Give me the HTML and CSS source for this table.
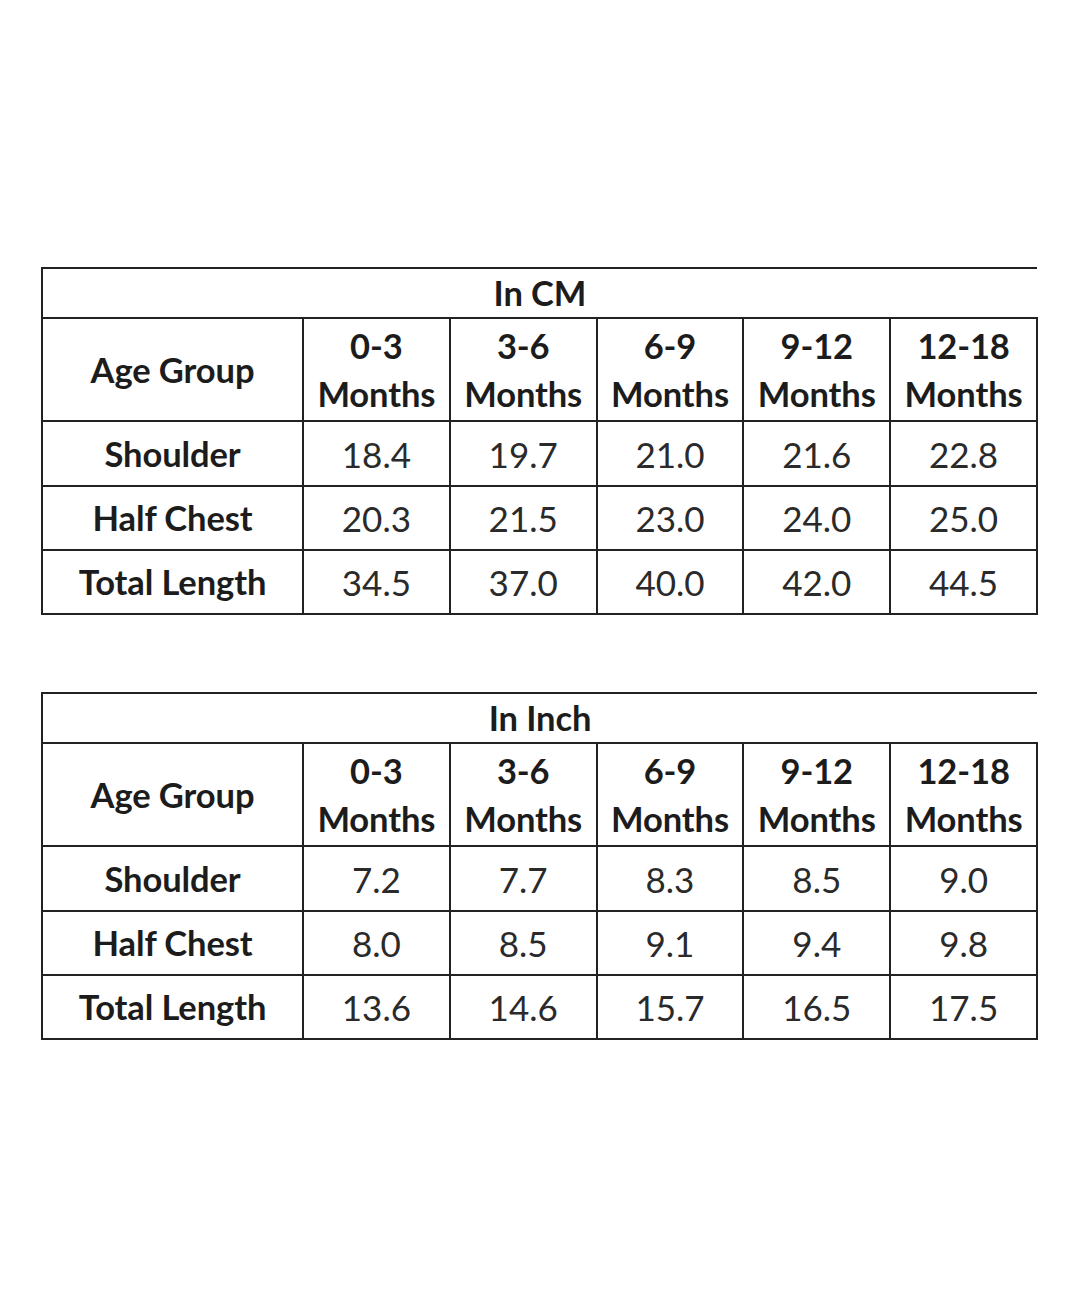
FILE: index.html
```html
<!DOCTYPE html>
<html>
<head>
<meta charset="utf-8">
<link rel="stylesheet" href="styles.css">
</head>
<body>
<div class="page">
  <table class="size">
    <colgroup><col class="c-first"><col class="c"><col class="c"><col class="c"><col class="c"><col class="c"></colgroup>
    <tr class="r-title"><th class="title" colspan="6">In CM</th></tr>
    <tr class="r-head"><th class="label">Age Group</th><th>0-3<br>Months</th><th>3-6<br>Months</th><th>6-9<br>Months</th><th>9-12<br>Months</th><th>12-18<br>Months</th></tr>
    <tr class="r-data r-first"><th class="label">Shoulder</th><td>18.4</td><td>19.7</td><td>21.0</td><td>21.6</td><td>22.8</td></tr>
    <tr class="r-data"><th class="label">Half Chest</th><td>20.3</td><td>21.5</td><td>23.0</td><td>24.0</td><td>25.0</td></tr>
    <tr class="r-data"><th class="label">Total Length</th><td>34.5</td><td>37.0</td><td>40.0</td><td>42.0</td><td>44.5</td></tr>
  </table>
  <table class="size">
    <colgroup><col class="c-first"><col class="c"><col class="c"><col class="c"><col class="c"><col class="c"></colgroup>
    <tr class="r-title"><th class="title" colspan="6">In Inch</th></tr>
    <tr class="r-head"><th class="label">Age Group</th><th>0-3<br>Months</th><th>3-6<br>Months</th><th>6-9<br>Months</th><th>9-12<br>Months</th><th>12-18<br>Months</th></tr>
    <tr class="r-data r-first"><th class="label">Shoulder</th><td>7.2</td><td>7.7</td><td>8.3</td><td>8.5</td><td>9.0</td></tr>
    <tr class="r-data"><th class="label">Half Chest</th><td>8.0</td><td>8.5</td><td>9.1</td><td>9.4</td><td>9.8</td></tr>
    <tr class="r-data"><th class="label">Total Length</th><td>13.6</td><td>14.6</td><td>15.7</td><td>16.5</td><td>17.5</td></tr>
  </table>
</div>
</body>
</html>
```
FILE: styles.css
```css
html, body { margin: 0; padding: 0; background: #fff; }
.page {
  padding: 267px 0 0 41px;
  display: flex;
  flex-direction: column;
  gap: 77px;
  font-family: Lato, "Liberation Sans", sans-serif;
}
.size {
  border-collapse: collapse;
  table-layout: fixed;
  width: 995px;
}
.c-first { width: 261px; }
.c { width: 146.8px; }
.size th, .size td {
  border: 2px solid #222;
  padding: 0;
  text-align: center;
  vertical-align: middle;
  color: #1c1c1c;
}
.size th { font-weight: 700; font-size: 34.5px; line-height: 48px; letter-spacing: -0.1px; }
.size td { font-weight: 400; font-size: 35px; line-height: 42px; color: #2a2a2a; }
.size th.title { border-right: none; height: 48px; }
.r-head th { height: 101px; }
.r-data th, .r-data td { height: 62px; }
.r-first th, .r-first td { height: 63px; }
```
